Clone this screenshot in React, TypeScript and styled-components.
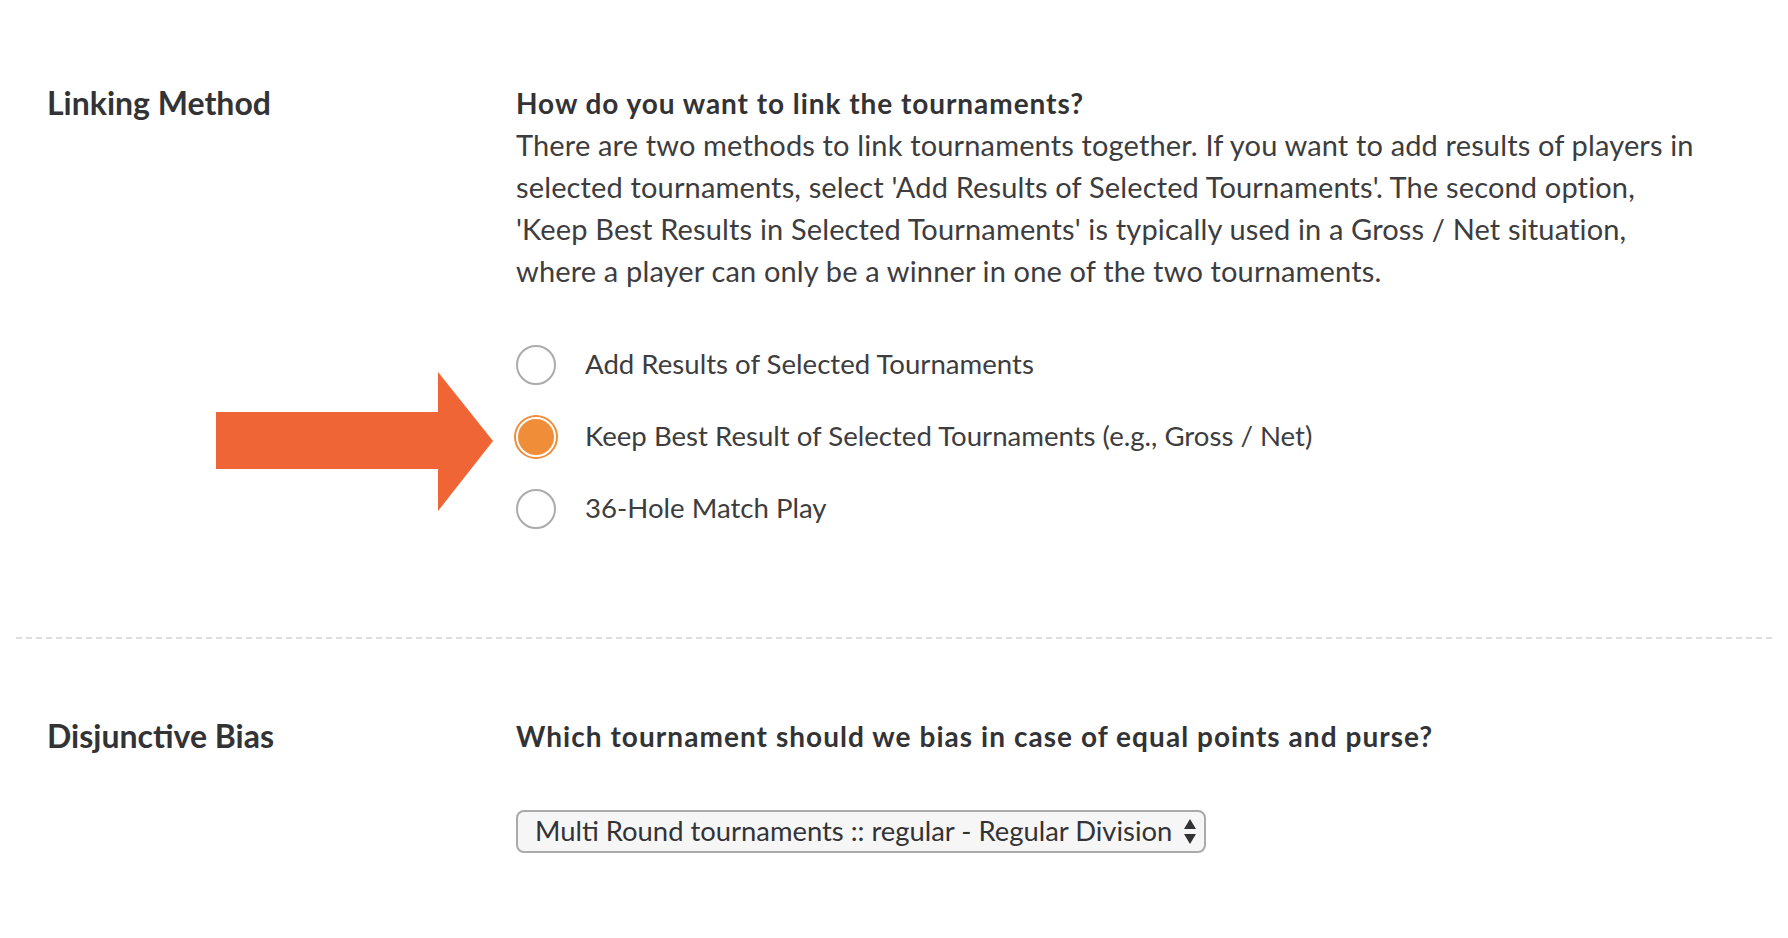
import React from "react";
import styled, { createGlobalStyle } from "styled-components";

const GlobalStyle = createGlobalStyle`
  html, body {
    margin: 0;
    padding: 0;
    background: #ffffff;
  }
  body {
    font-family: Lato, "Open Sans", Arial, sans-serif;
    color: #3d3d40;
    -webkit-font-smoothing: antialiased;
  }
`;

const Page = styled.main`
  padding: 82px 12px 0 16px;
`;

const Section = styled.section<{ $top?: number; $bottom?: number }>`
  display: grid;
  grid-template-columns: 469px 1fr;
  padding: ${(p) => p.$top ?? 0}px 0 ${(p) => p.$bottom ?? 0}px 31px;
`;

const Label = styled.h2`
  margin: 0;
  font-size: 32px;
  line-height: 42px;
  font-weight: 700;
  color: #333336;
`;

const Content = styled.div`
  display: flex;
  flex-direction: column;
  align-items: flex-start;
`;

const Question = styled.h3<{ $spacing?: number }>`
  margin: 0;
  font-size: 28px;
  line-height: 42px;
  font-weight: 700;
  letter-spacing: ${(p) => p.$spacing ?? 0.95}px;
  color: #333336;
`;

const Body = styled.p`
  margin: 0;
  font-size: 29px;
  line-height: 42px;
  font-weight: 400;
  letter-spacing: 0.15px;
  color: #3d3d40;
  white-space: nowrap;
`;

const Options = styled.div`
  position: relative;
  display: flex;
  flex-direction: column;
  margin-top: 37px;
`;

const OptionRow = styled.label`
  display: flex;
  align-items: center;
  gap: 29px;
  height: 72px;
  font-size: 27.6px;
  color: #3d3d40;
  cursor: pointer;
`;

const OptionText = styled.span`
  padding-bottom: 3px;
`;

const RadioDot = styled.span<{ $checked?: boolean }>`
  box-sizing: border-box;
  width: 40px;
  height: 40px;
  border-radius: 50%;
  flex: none;
  background: ${(p) => (p.$checked ? "#f08d38" : "#ffffff")};
  border: 2px solid ${(p) => (p.$checked ? "#ffffff" : "#ababab")};
  box-shadow: ${(p) => (p.$checked ? "0 0 0 2px #f08d38" : "none")};
`;

const ArrowMark = styled.svg`
  position: absolute;
  left: -300px;
  top: 43px;
  width: 277px;
  height: 139px;
`;

const Divider = styled.hr`
  margin: 0;
  border: 0;
  height: 2px;
  background: repeating-linear-gradient(
    to right,
    #dddddd 0 6px,
    transparent 6px 10px
  );
`;

const SelectBox = styled.div`
  box-sizing: border-box;
  margin-top: 53px;
  width: 690px;
  height: 43px;
  display: flex;
  align-items: center;
  justify-content: space-between;
  padding: 0 8px 0 17px;
  background: #f6f6f6;
  border: 2px solid #aaaaaa;
  border-radius: 8px;
  font-size: 27.4px;
  color: #333336;
  white-space: nowrap;
`;

const SelectText = styled.span`
  white-space: nowrap;
  padding-bottom: 2px;
`;

const SelectArrows = styled.svg`
  width: 12px;
  height: 26px;
  flex: none;
`;

const options = [
  "Add Results of Selected Tournaments",
  "Keep Best Result of Selected Tournaments (e.g., Gross / Net)",
  "36-Hole Match Play",
];

export default function App() {
  return (
    <>
      <GlobalStyle />
      <Page>
        <Section $bottom={92}>
          <Label>Linking Method</Label>
          <Content>
            <Question>How do you want to link the tournaments?</Question>
            <Body>
              There are two methods to link tournaments together. If you want to add results of players in
              <br />
              selected tournaments, select 'Add Results of Selected Tournaments'. The second option,
              <br />
              'Keep Best Results in Selected Tournaments' is typically used in a Gross / Net situation,
              <br />
              where a player can only be a winner in one of the two tournaments.
            </Body>
            <Options>
              <ArrowMark viewBox="0 0 277 139" aria-hidden>
                <polygon
                  points="0,40 222,40 222,0 277,69 222,139 222,97 0,97"
                  fill="#f06535"
                />
              </ArrowMark>
              {options.map((o, i) => (
                <OptionRow key={o}>
                  <RadioDot $checked={i === 1} />
                  <OptionText>{o}</OptionText>
                </OptionRow>
              ))}
            </Options>
          </Content>
        </Section>
        <Divider />
        <Section $top={76}>
          <Label>Disjunctive Bias</Label>
          <Content>
            <Question $spacing={1.05}>
              Which tournament should we bias in case of equal points and purse?
            </Question>
            <SelectBox role="combobox">
              <SelectText>Multi Round tournaments :: regular - Regular Division</SelectText>
              <SelectArrows viewBox="0 0 12 26" aria-hidden>
                <polygon points="6,0 12,10 0,10" fill="#333336" />
                <polygon points="0,15 12,15 6,25" fill="#333336" />
              </SelectArrows>
            </SelectBox>
          </Content>
        </Section>
      </Page>
    </>
  );
}
